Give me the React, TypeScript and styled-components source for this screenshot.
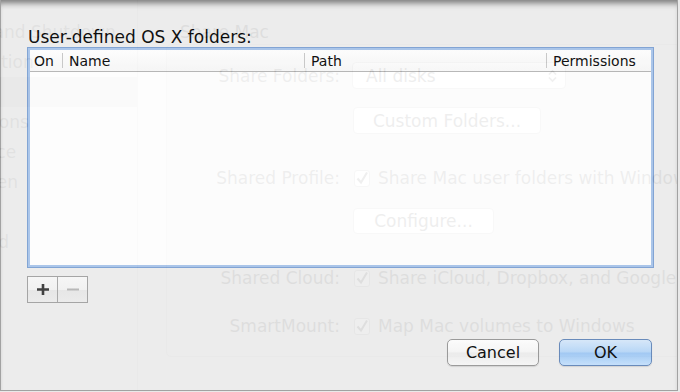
import React from 'react';
import styled, { createGlobalStyle } from 'styled-components';

const font = `"Lucida Grande", "DejaVu Sans", Verdana, sans-serif`;

const GlobalStyle = createGlobalStyle`
  *, *::before, *::after { box-sizing: border-box; }
  html, body { margin: 0; padding: 0; background: #e9e9e9; }
  body { font-family: ${font}; }
`;

const Screen = styled.div`
  position: relative;
  width: 680px;
  height: 392px;
  overflow: hidden;
  background: #e9e9e9;
`;

/* ---------- the preferences window behind the sheet ---------- */

const Window = styled.div`
  display: flex;
  width: 677px;
  height: 390px;
  overflow: hidden;
  color: #2a2a2a;
  font-size: 17px;
  background: #e6e6e6;
`;

const Sidebar = styled.ul`
  list-style: none;
  margin: 0;
  padding: 17px 0 0;
  width: 138px;
  flex: none;
  border-right: 1px solid #c4c4c4;
  background: #ececec;
  color: #555;
  overflow: hidden;
`;

const SideItem = styled.li<{ $selected?: boolean }>`
  height: 30px;
  display: flex;
  align-items: center;
  white-space: nowrap;
  background: ${(p) => (p.$selected ? '#c2c2c2' : 'transparent')};

  span {
    margin-left: -75px;
  }
`;

const Main = styled.div`
  flex: 1;
  min-width: 0;
  padding: 22px 0 0 28px;
`;

const GroupTitle = styled.div`
  margin-left: 14px;
  height: 20px;
  line-height: 20px;
`;

const GroupBox = styled.div`
  margin-top: 2px;
  width: 620px;
  height: 313px;
  border: 1px solid #c0c0c0;
  border-radius: 5px;
  background: #e1e1e1;
`;

const FormRow = styled.div<{ $top: number; $height: number }>`
  display: flex;
  align-items: center;
  gap: 12px;
  margin-top: ${(p) => p.$top}px;
  height: ${(p) => p.$height}px;
  white-space: nowrap;
`;

const FormLabel = styled.div`
  width: 173px;
  text-align: right;
`;

const Popup = styled.div`
  width: 214px;
  height: 27px;
  display: flex;
  align-items: center;
  justify-content: space-between;
  padding: 0 8px 0 13px;
  background: #fff;
  border: 1px solid #a9a9a9;
  border-radius: 4px;
`;

const GhostButton = styled.div<{ $width: number }>`
  width: ${(p) => p.$width}px;
  height: ${(p) => (p.$width > 150 ? 27 : 26)}px;
  margin-left: 1px;
  display: flex;
  align-items: center;
  justify-content: center;
  background: #fff;
  border: 1px solid #a9a9a9;
  border-radius: 4px;
`;

const Check = styled.span`
  width: 16px;
  height: 17px;
  margin-left: 2px;
  margin-right: -4px;
  border: 1px solid #9a9a9a;
  border-radius: 3px;
  background: #fff;
  display: flex;
  align-items: center;
  justify-content: center;
`;

/* ---------- the sheet ---------- */

const Sheet = styled.div`
  position: absolute;
  top: 0;
  left: 0;
  width: 678px;
  height: 391px;
  display: flex;
  flex-direction: column;
  padding: 27px 23px 0 26px;
  background: #ededed;
  opacity: 0.92;
  border: 1px solid #9c9c9c;
  border-top: none;
  box-shadow: inset 0 7px 6px -4px rgba(0, 0, 0, 0.55);
  color: #000;
`;

const Title = styled.div`
  margin-left: 1px;
  font-size: 17px;
  line-height: 20px;
  height: 20px;
`;

const TableFrame = styled.div`
  height: 221px;
  padding: 2px;
  border: 1px solid #7a9fd3;
  box-shadow: inset 0 0 0 2px #a6c3ea;
`;

const TableBody = styled.div`
  height: 100%;
  background: #fff;
`;

const HeaderRow = styled.div`
  display: flex;
  height: 22px;
  border-bottom: 1px solid #b3b3b3;
  background: linear-gradient(#ffffff, #f7f7f7);
  font-size: 14px;
`;

const HeaderCell = styled.div<{ $width?: number; $first?: boolean }>`
  position: relative;
  flex: ${(p) => (p.$width ? `0 0 ${p.$width}px` : '1')};
  display: flex;
  align-items: center;
  padding-left: ${(p) => (p.$first ? 4 : 7)}px;

  &::before {
    content: '';
    display: ${(p) => (p.$first ? 'none' : 'block')};
    position: absolute;
    left: 0;
    top: 3px;
    bottom: 3px;
    width: 1px;
    background: #c6c6c6;
  }
`;

const Segments = styled.div`
  display: flex;
  width: 61px;
  height: 27px;
  margin-top: 8px;
  border: 1px solid #a0a0a0;
`;

const Segment = styled.div<{ $first?: boolean }>`
  width: ${(p) => (p.$first ? 30 : 29)}px;
  display: flex;
  align-items: center;
  justify-content: center;
  border-right: ${(p) => (p.$first ? '1px solid #a5a5a5' : 'none')};
  background: linear-gradient(#f7f7f7 0%, #f2f2f2 50%, #e6e6e6 51%, #ebebeb 100%);
`;

const Footer = styled.div`
  display: flex;
  justify-content: flex-end;
  gap: 20px;
  margin-top: auto;
  margin-bottom: 24px;
  margin-right: 2px;
`;

const PushButton = styled.button<{ $primary?: boolean }>`
  width: ${(p) => (p.$primary ? 93 : 92)}px;
  height: 27px;
  padding: 0;
  font-family: ${font};
  font-size: 16px;
  color: #000;
  border-radius: 5px;
  border: 1px solid ${(p) => (p.$primary ? '#5f84b8' : '#959595')};
  background: ${(p) =>
    p.$primary
      ? 'linear-gradient(#d6e8fb 0%, #b5d6f8 48%, #9cc7f5 52%, #c3e0fd 100%)'
      : 'linear-gradient(#ffffff 0%, #f6f6f6 48%, #ececec 52%, #f7f7f7 100%)'};
  box-shadow: 0 1px 1px rgba(0, 0, 0, 0.12);
`;

const Arrows = () => (
  <svg width="9" height="14" viewBox="0 0 9 14">
    <path d="M1 5.5L4.5 2 8 5.5M1 8.5L4.5 12 8 8.5" fill="none" stroke="#444" strokeWidth="1.6" />
  </svg>
);

const Tick = () => (
  <svg width="14" height="14" viewBox="0 0 14 14">
    <path d="M2.5 7.5L6 11.5 12 1.5" fill="none" stroke="#333" strokeWidth="2" />
  </svg>
);

const PlusIcon = () => (
  <svg width="12" height="11" viewBox="0 0 12 11">
    <path d="M0 5.5H12M6 0V11" stroke="#333" strokeWidth="2.6" />
  </svg>
);

const MinusIcon = () => (
  <svg width="12" height="11" viewBox="0 0 12 11">
    <path d="M0 5.5H12" stroke="#b4b4b4" strokeWidth="2" />
  </svg>
);

const sideItems = [
  'Startup and Shutdown',
  'Optimization',
  'Sharing',
  'Applications',
  'Preference',
  'Full Screen',
  'More',
  'Advanced',
];

export default function App() {
  return (
    <>
      <GlobalStyle />
      <Screen>
        <Window>
          <Sidebar>
            {sideItems.map((item) => (
              <SideItem key={item} $selected={item === 'Sharing'}>
                <span>{item}</span>
              </SideItem>
            ))}
          </Sidebar>
          <Main>
            <GroupTitle>Share Mac</GroupTitle>
            <GroupBox>
              <FormRow $top={17} $height={27}>
                <FormLabel>Share Folders:</FormLabel>
                <Popup>
                  All disks
                  <Arrows />
                </Popup>
              </FormRow>
              <FormRow $top={18} $height={27}>
                <FormLabel />
                <GhostButton $width={188}>Custom Folders...</GhostButton>
              </FormRow>
              <FormRow $top={34} $height={20}>
                <FormLabel>Shared Profile:</FormLabel>
                <Check>
                  <Tick />
                </Check>
                Share Mac user folders with Windows
              </FormRow>
              <FormRow $top={20} $height={26}>
                <FormLabel />
                <GhostButton $width={141}>Configure...</GhostButton>
              </FormRow>
              <FormRow $top={34} $height={20}>
                <FormLabel>Shared Cloud:</FormLabel>
                <Check>
                  <Tick />
                </Check>
                Share iCloud, Dropbox, and Google Drive
              </FormRow>
              <FormRow $top={28} $height={20}>
                <FormLabel>SmartMount:</FormLabel>
                <Check>
                  <Tick />
                </Check>
                Map Mac volumes to Windows
              </FormRow>
            </GroupBox>
          </Main>
        </Window>

        <Sheet>
          <Title>User-defined OS X folders:</Title>
          <TableFrame>
            <TableBody>
              <HeaderRow>
                <HeaderCell $first $width={32}>On</HeaderCell>
                <HeaderCell $width={242}>Name</HeaderCell>
                <HeaderCell $width={242}>Path</HeaderCell>
                <HeaderCell>Permissions</HeaderCell>
              </HeaderRow>
            </TableBody>
          </TableFrame>
          <Segments>
            <Segment $first>
              <PlusIcon />
            </Segment>
            <Segment>
              <MinusIcon />
            </Segment>
          </Segments>
          <Footer>
            <PushButton>Cancel</PushButton>
            <PushButton $primary>OK</PushButton>
          </Footer>
        </Sheet>
      </Screen>
    </>
  );
}
